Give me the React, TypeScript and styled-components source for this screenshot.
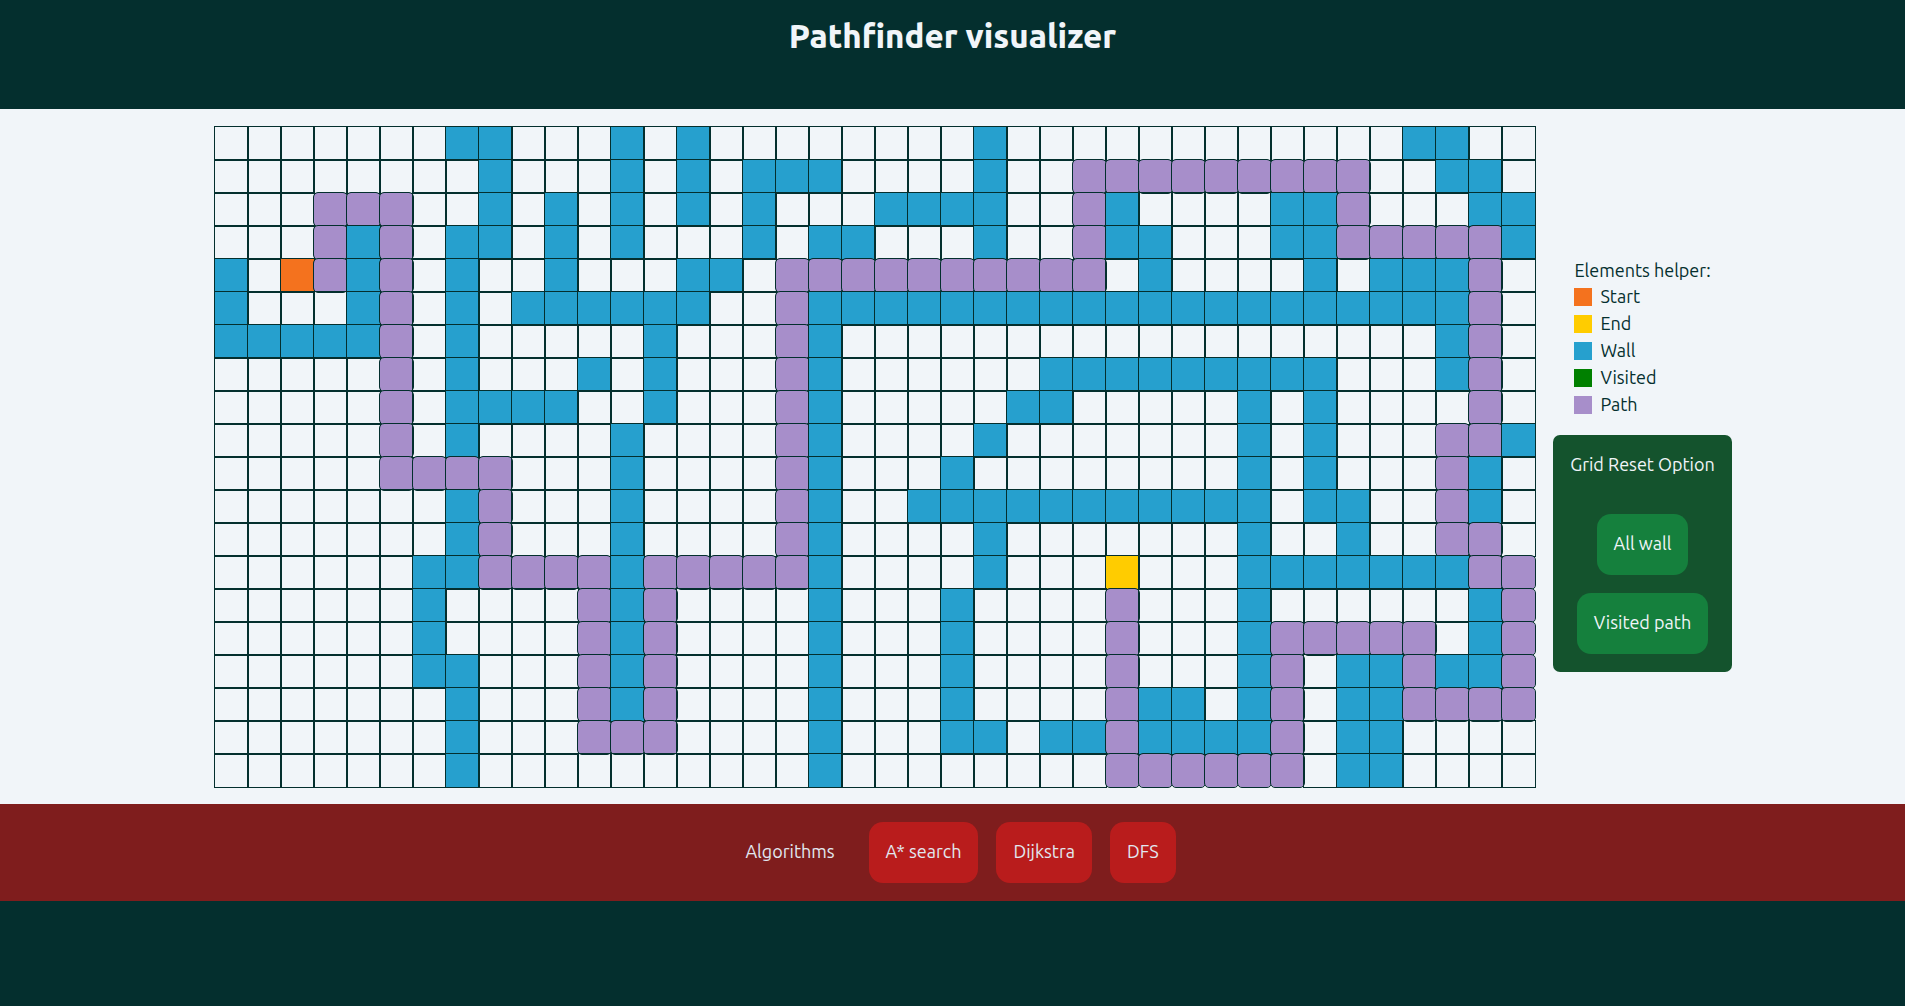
import React from "react";
import styled, { createGlobalStyle } from "styled-components";

type CellKind = "empty" | "start" | "end" | "wall" | "visited" | "path";

const COLUMNS = 40;

const kindColors: Record<CellKind, string> = {
  empty: "transparent",
  start: "#f4721e",
  end: "#ffcc00",
  wall: "#26a0ce",
  visited: "#008000",
  path: "#a78eca",
};

const kindCodes: Record<string, CellKind> = {
  S: "start",
  E: "end",
  W: "wall",
  V: "visited",
  P: "path",
};

/* One line per grid row: a kind letter, then the columns that it covers. */
const board = [
  "W7-8 W12 W14 W23 W36-37",
  "W8 W12 W14 W16-18 W23 P26-34 W37-38",
  "P3-5 W8 W10 W12 W14 W16 W20-23 P26 W27 W32-33 P34 W38-39",
  "P3 W4 P5 W7-8 W10 W12 W16 W18-19 W23 P26 W27-28 W32-33 P34-38 W39",
  "W0 S2 P3 W4 P5 W7 W10 W14-15 P17-26 W28 W33 W35-37 P38",
  "W0 W4 P5 W7 W9-14 P17 W18-37 P38",
  "W0-4 P5 W7 W13 P17 W18 W37 P38",
  "P5 W7 W11 W13 P17 W18 W25-33 W37 P38",
  "P5 W7-10 W13 P17 W18 W24-25 W31 W33 P38",
  "P5 W7 W12 P17 W18 W23 W31 W33 P37-38 W39",
  "P5-8 W12 P17 W18 W22 W31 W33 P37 W38",
  "W7 P8 W12 P17 W18 W21-31 W33-34 P37 W38",
  "W7 P8 W12 P17 W18 W23 W31 W34 P37-38",
  "W6-7 P8-11 W12 P13-17 W18 W23 E27 W31-37 P38-39",
  "W6 P11 W12 P13 W18 W22 P27 W31 W38 P39",
  "W6 P11 W12 P13 W18 W22 P27 W31 P32-36 W38 P39",
  "W6-7 P11 W12 P13 W18 W22 P27 W31 P32 W34-35 P36 W37-38 P39",
  "W7 P11 W12 P13 W18 W22 P27 W28-29 W31 P32 W34-35 P36-39",
  "W7 P11-13 W18 W22-23 W25-26 P27 W28-31 P32 W34-35",
  "W7 W18 P27-32 W34-35",
];

function parseRow(row: string): CellKind[] {
  const cells: CellKind[] = Array(COLUMNS).fill("empty");
  for (const run of row.split(" ")) {
    const [from, to = from] = run.slice(1).split("-").map(Number);
    cells.fill(kindCodes[run[0]], from, to + 1);
  }
  return cells;
}

const cells = board.flatMap(parseRow);

const legend: { kind: CellKind; label: string }[] = [
  { kind: "start", label: "Start" },
  { kind: "end", label: "End" },
  { kind: "wall", label: "Wall" },
  { kind: "visited", label: "Visited" },
  { kind: "path", label: "Path" },
];

const GlobalStyle = createGlobalStyle`
  *, *::before, *::after { box-sizing: border-box; }
  body {
    margin: 0;
    background: #042f2e;
    color: #042f2e;
    font-family: Ubuntu, "Noto Sans", "Open Sans", sans-serif;
    font-size: 18px;
    line-height: 25px;
  }
`;

const Header = styled.header`
  padding: 16px 18px 53px;
  color: #f1f5f9;
  text-align: center;
`;

const Title = styled.h1`
  margin: 0;
  font-size: 33px;
  line-height: 40px;
  font-weight: 800;
`;

const Main = styled.main`
  display: flex;
  justify-content: center;
  align-items: center;
  gap: 18px;
  padding: 18px 0 17px 42px;
  background: #f1f5f9;
`;

const Board = styled.div`
  display: grid;
  flex: none;
  grid-template-columns: repeat(${COLUMNS}, 33px);
  grid-auto-rows: 33px;
`;

const Cell = styled.div<{ $kind: CellKind }>`
  outline: 1px solid #042f2e;
  background: ${(p) => kindColors[p.$kind]};
  border-radius: ${(p) => (p.$kind === "path" ? "4px" : "0")};
`;

const Sidebar = styled.aside`
  display: flex;
  flex-direction: column;
  align-items: center;
`;

const Legend = styled.section`
  padding: 16px 0 17px;
`;

const LegendTitle = styled.h2`
  margin: 0;
  font-size: inherit;
  font-weight: 400;
`;

const LegendList = styled.ul`
  margin: 0;
  padding: 0;
  list-style: none;
  line-height: 27px;
`;

const LegendItem = styled.li`
  display: flex;
  align-items: center;
  gap: 8px;
`;

const Swatch = styled.span<{ $kind: CellKind }>`
  width: 18px;
  height: 18px;
  background: ${(p) => kindColors[p.$kind]};
`;

const ResetPanel = styled.section`
  display: flex;
  flex-direction: column;
  align-items: center;
  gap: 18px;
  padding: 17px 17px 18px;
  border-radius: 7px;
  background: #14532d;
  color: #f1f5f9;
`;

const ResetTitle = styled.h2`
  margin: 0 0 19px;
  font-size: inherit;
  font-weight: 400;
`;

const Button = styled.button<{ $tone: "green" | "red" }>`
  padding: 17px 17px 19px;
  border: 0;
  border-radius: 14px;
  background: ${(p) => (p.$tone === "green" ? "#15803d" : "#b91c1c")};
  color: inherit;
  font: inherit;
  cursor: pointer;
`;

const Algorithms = styled.footer`
  display: flex;
  justify-content: center;
  align-items: center;
  gap: 18px;
  padding: 18px;
  background: #7f1d1d;
  color: #e2e8f0;
`;

const AlgorithmsLabel = styled.span`
  padding: 0 16px 2px;
`;

export default function App() {
  return (
    <>
      <GlobalStyle />
      <Header>
        <Title>Pathfinder visualizer</Title>
      </Header>
      <Main>
        <Board>
          {cells.map((kind, index) => (
            <Cell key={index} $kind={kind} />
          ))}
        </Board>
        <Sidebar>
          <Legend>
            <LegendTitle>Elements helper:</LegendTitle>
            <LegendList>
              {legend.map(({ kind, label }) => (
                <LegendItem key={kind}>
                  <Swatch $kind={kind} />
                  {label}
                </LegendItem>
              ))}
            </LegendList>
          </Legend>
          <ResetPanel>
            <ResetTitle>Grid Reset Option</ResetTitle>
            <Button type="button" $tone="green">All wall</Button>
            <Button type="button" $tone="green">Visited path</Button>
          </ResetPanel>
        </Sidebar>
      </Main>
      <Algorithms>
        <AlgorithmsLabel>Algorithms</AlgorithmsLabel>
        <Button type="button" $tone="red">A* search</Button>
        <Button type="button" $tone="red">Dijkstra</Button>
        <Button type="button" $tone="red">DFS</Button>
      </Algorithms>
    </>
  );
}
